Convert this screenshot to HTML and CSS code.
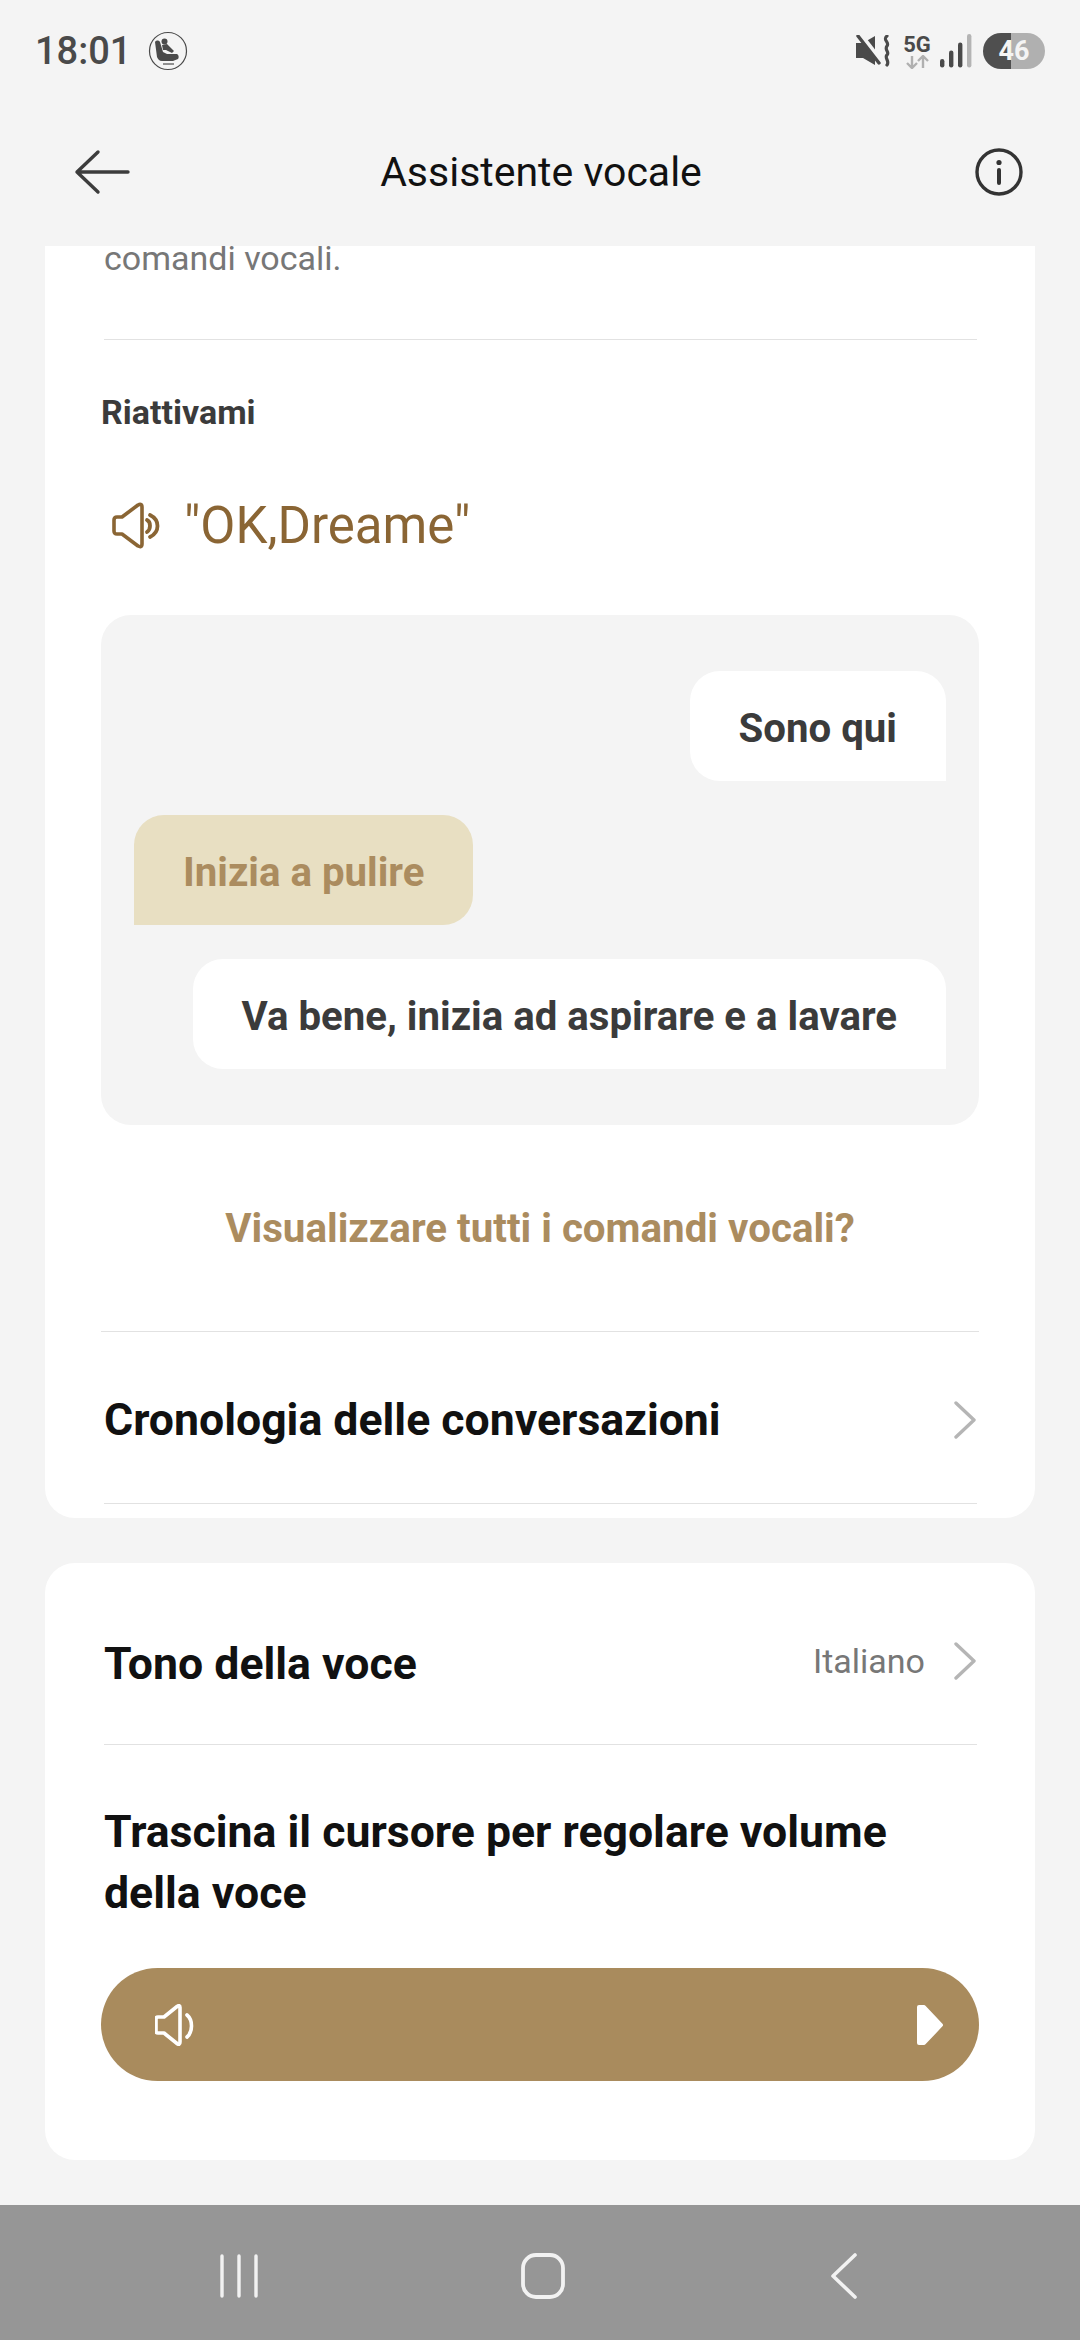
FILE: index.html
```html
<!DOCTYPE html>
<html lang="it">
<head>
    <meta charset="UTF-8">
    <meta name="viewport" content="width=device-width, initial-scale=1.0">
    <title>Assistente vocale</title>
    <link rel="stylesheet" href="styles.css">
</head>
<body>
    <div class="screen">
        <!-- Status bar -->
        <div class="status">
            <div class="status-left">
                <span class="clock">18:01</span>
                <svg class="seat" width="40" height="40" viewBox="0 0 40 40">
                    <circle cx="20" cy="20" r="18.5" fill="none" stroke="#4a4a4a" stroke-width="1.2"/>
                    <circle cx="16.5" cy="10.5" r="3" fill="#4a4a4a"/>
                    <path d="M7 11c1-2 4-2 5 0l3 10 4 2 10 0c2 1 2 4 1 5l-5 2-11 0c-3 0-4-2-5-4z" fill="#4a4a4a"/>
                    <path d="M14 14l5-1 7 7-2 2-6-3-3 0z" fill="#4a4a4a"/>
                    <path d="M15 33h11" stroke="#4a4a4a" stroke-width="1.2"/>
                </svg>
            </div>
            <div class="status-right">
                <svg class="mute" width="36" height="32" viewBox="0 0 36 32">
                    <path d="M1 8h7l12-7v29L8 23H1z" fill="#4a4a4a"/>
                    <path d="M5 0l21 27" stroke="#f4f4f4" stroke-width="6"/>
                    <path d="M3 1l21 27" stroke="#4a4a4a" stroke-width="3.4" stroke-linecap="round"/>
                    <path d="M32 1c-5 4 3 6 0 10s3 6 0 9 3 6 0 10" fill="none" stroke="#4a4a4a" stroke-width="3.2" stroke-linecap="round"/>
                </svg>
                <div class="net">
                    <span class="net-label">5G</span>
                    <svg width="24" height="14" viewBox="0 0 24 14">
                        <path d="M7 1v11M2 8l5 5 5-5" fill="none" stroke="#b0b0b0" stroke-width="2.4"/>
                        <path d="M18 13V2M13 6l5-5 5 5" fill="none" stroke="#b0b0b0" stroke-width="2.4"/>
                    </svg>
                </div>
                <svg class="signal" width="32" height="34" viewBox="0 0 32 34">
                    <rect x="0" y="25" width="4.4" height="8.5" rx="2.2" fill="#4a4a4a"/>
                    <rect x="9" y="16.5" width="4.4" height="17" rx="2.2" fill="#4a4a4a"/>
                    <rect x="18" y="8.5" width="4.4" height="25" rx="2.2" fill="#4a4a4a"/>
                    <rect x="27" y="0" width="4.4" height="33.5" rx="2.2" fill="#b4b4b4"/>
                </svg>
                <div class="battery"><span class="battery-num">46</span></div>
            </div>
        </div>

        <!-- Title bar -->
        <div class="titlebar">
            <svg width="56" height="46" viewBox="0 0 56 46">
                <path d="M54 23H3M24 3L3 23l21 20" fill="none" stroke="#3c3c3c" stroke-width="3.4" stroke-linecap="round" stroke-linejoin="round"/>
            </svg>
            <span class="title">Assistente vocale</span>
            <svg width="48" height="48" viewBox="0 0 48 48">
                <circle cx="24" cy="24" r="22" fill="none" stroke="#333" stroke-width="3.4"/>
                <circle cx="24" cy="14.5" r="2.6" fill="#333"/>
                <path d="M24 22v13" stroke="#333" stroke-width="4" stroke-linecap="round"/>
            </svg>
        </div>

        <div class="content">
            <div class="card card-first">
                <p class="desc">comandi vocali.</p>
                <div class="sep first-sep"></div>
                <h2 class="label">Riattivami</h2>
                <div class="wake">
                    <svg width="48" height="47" viewBox="0 0 48 47">
                        <path d="M2 18c0-2 1-3 3-3h5L26 3c2-1 4-1 4 2v37c0 3-2 3-4 2L10 32H5c-2 0-3-1-3-3z" fill="none" stroke="#8a6534" stroke-width="3.6" stroke-linejoin="round"/>
                        <path d="M35 18c4 2 4 9 0 12M38 13c10 5 10 17 0 22" fill="none" stroke="#8a6534" stroke-width="3.8" stroke-linecap="round"/>
                    </svg>
                    <span class="wake-text">"OK,Dreame"</span>
                </div>
                <div class="chat">
                    <div class="bubble bubble-right">Sono qui</div>
                    <div class="bubble bubble-user">Inizia a pulire</div>
                    <div class="bubble bubble-right">Va bene, inizia ad aspirare e a lavare</div>
                </div>
                <div class="all-link">Visualizzare tutti i comandi vocali?</div>
                <div class="sep sep-wide"></div>
                <div class="row row-history">
                    <span class="row-title">Cronologia delle conversazioni</span>
                    <svg class="chev" width="24" height="38" viewBox="0 0 24 38"><path d="M3 2l18 17L3 36" fill="none" stroke="#b5b5b5" stroke-width="3.4" stroke-linecap="round" stroke-linejoin="round"/></svg>
                </div>
                <div class="sep"></div>
            </div>

            <div class="card card-second">
                <div class="row row-tone">
                    <span class="row-title">Tono della voce</span>
                    <div class="row-end">
                        <span class="row-value">Italiano</span>
                        <svg class="chev" width="24" height="38" viewBox="0 0 24 38"><path d="M3 2l18 17L3 36" fill="none" stroke="#b5b5b5" stroke-width="3.4" stroke-linecap="round" stroke-linejoin="round"/></svg>
                    </div>
                </div>
                <div class="sep"></div>
                <p class="volume-title">Trascina il cursore per regolare volume della voce</p>
                <div class="slider">
                    <svg width="42" height="42" viewBox="0 0 42 42">
                        <path d="M3 13h6L22 2.5c2-1.500 3-1 3 1V38c0 2.500-1 3-3 1.500L9 29H3c-1.300 0-2-.7-2-2V15c0-1.300.7-2 2-2z" fill="none" stroke="#fff" stroke-width="3.6" stroke-linejoin="round"/>
                        <path d="M32 11c6 5 6 17 0 22" fill="none" stroke="#fff" stroke-width="3.6" stroke-linecap="round"/>
                    </svg>
                    <svg width="28" height="42" viewBox="0 0 28 42">
                        <path d="M3 3h5l17 18L8 39H3z" fill="#fff" stroke="#fff" stroke-width="4" stroke-linejoin="round"/>
                    </svg>
                </div>
            </div>
        </div>

        <!-- Android nav bar -->
        <div class="navbar">
            <svg width="42" height="46" viewBox="0 0 42 46">
                <path d="M4 3v40M21 3v40M38 3v40" stroke="#f2f2f2" stroke-width="3.4" stroke-linecap="round"/>
            </svg>
            <svg width="46" height="48" viewBox="0 0 46 48">
                <rect x="3" y="3" width="40" height="42" rx="13" fill="none" stroke="#f2f2f2" stroke-width="3.8"/>
            </svg>
            <svg class="nav-back" width="28" height="48" viewBox="0 0 28 48">
                <path d="M25 3L3 24l22 21" fill="none" stroke="#f2f2f2" stroke-width="3.6" stroke-linecap="round" stroke-linejoin="round"/>
            </svg>
        </div>
    </div>
</body>
</html>
```

FILE: styles.css
```css
* {
    box-sizing: border-box;
}

html, body {
    margin: 0;
    padding: 0;
}

body {
    font-family: Roboto, "Noto Sans", sans-serif;
    background-color: #f4f4f4;
}

.screen {
    width: 1080px;
    height: 2340px;
    display: flex;
    flex-direction: column;
    background-color: #f4f4f4;
    overflow: hidden;
}

/* Status bar */
.status {
    height: 102px;
    flex-shrink: 0;
    display: flex;
    align-items: center;
    justify-content: space-between;
    padding: 0 35px;
}

.status-left, .status-right {
    display: flex;
    align-items: center;
}

.clock {
    font-size: 38px;
    font-weight: 500;
    color: #4a4a4a;
}

.seat {
    margin-left: 17px;
}

.status-right svg {
    flex-shrink: 0;
}

.net {
    display: flex;
    flex-direction: column;
    align-items: center;
    margin-left: 11px;
    width: 30px;
    padding-top: 1px;
}

.net-label {
    font-size: 22px;
    line-height: 19px;
    margin-bottom: 1px;
    font-weight: 700;
    color: #4a4a4a;
}

.signal {
    margin-left: 8px;
}

.battery {
    width: 62px;
    height: 36px;
    margin-left: 11px;
    border-radius: 18px;
    background: linear-gradient(90deg, #4f4f4f 0 45%, #b0b0b0 45% 100%);
    display: flex;
    align-items: center;
    justify-content: center;
}

.battery-num {
    font-size: 27px;
    font-weight: 700;
    color: #f4f4f4;
}

/* Title bar */
.titlebar {
    height: 144px;
    flex-shrink: 0;
    display: flex;
    align-items: center;
    justify-content: space-between;
    padding: 0 57px 4px 74px;
}

.title {
    font-size: 41px;
    color: #111;
    margin-right: 23px;
}

/* Scrolled content */
.content {
    flex: 1;
    min-height: 0;
    padding: 0 45px;
    overflow: hidden;
}

.card {
    background-color: #fff;
    border-radius: 30px;
    padding: 0 56px;
}

.card-first {
    margin-top: -30px;
    height: 1302px;
}

.card-second {
    margin-top: 45px;
    height: 597px;
}

.desc {
    margin: 0 3px;
    font-size: 34px;
    line-height: 48px;
    padding-top: 18px;
    color: #777;
}

.sep {
    height: 1px;
    margin: 0 2px 0 3px;
    background-color: #e2e2e2;
}

.first-sep {
    margin-top: 57px;
}

.sep-wide {
    margin: 0;
}

.label {
    margin: 0;
    padding-top: 54px;
    font-size: 34px;
    line-height: 36px;
    font-weight: 700;
    color: #3b3b3b;
}

.wake {
    display: flex;
    align-items: center;
    gap: 24px;
    margin: 65px 0 0 11px;
    height: 60px;
}

.wake-text {
    font-size: 51px;
    color: #8a6534;
}

/* Chat sample */
.chat {
    margin-top: 60px;
    height: 510px;
    padding: 56px 33px 0;
    display: flex;
    flex-direction: column;
    align-items: flex-start;
    gap: 34px;
    background-color: #f4f4f4;
    border-radius: 30px;
}

.bubble {
    height: 110px;
    padding: 4px 49px 0;
    display: flex;
    align-items: center;
    font-size: 40.2px;
    font-weight: 700;
    white-space: nowrap;
    color: #3b3b3b;
    background-color: #fff;
    border-radius: 30px;
}

.bubble-right {
    align-self: flex-end;
    border-bottom-right-radius: 0;
}

.bubble-user {
    color: #ab8c5f;
    background-color: #e8dfc2;
    border-bottom-left-radius: 0;
}

.all-link {
    height: 206px;
    display: flex;
    align-items: center;
    justify-content: center;
    font-size: 40.3px;
    font-weight: 700;
    color: #ab8c5f;
}

/* Rows */
.row {
    display: flex;
    align-items: center;
    justify-content: space-between;
    padding: 0 2px 0 3px;
}

.row-history {
    height: 171px;
    padding-top: 4px;
}

.row-tone {
    height: 181px;
    padding-top: 20px;
}

.row-title {
    font-size: 44.6px;
    font-weight: 700;
    color: #111;
}

.row-end {
    display: flex;
    align-items: center;
    gap: 28px;
    margin-bottom: 5px;
}

.row-value {
    font-size: 34px;
    color: #777;
}

.volume-title {
    margin: 0;
    padding: 57px 3px 0;
    font-size: 44.6px;
    line-height: 61px;
    font-weight: 700;
    color: #111;
}

.slider {
    height: 113px;
    margin-top: 44px;
    padding: 0 35px 0 54px;
    display: flex;
    align-items: center;
    justify-content: space-between;
    background-color: #a98b5d;
    border-radius: 57px;
}

/* Nav bar */
.navbar {
    height: 135px;
    flex-shrink: 0;
    display: flex;
    align-items: center;
    gap: 260px;
    padding: 6px 0 0 218px;
    background-color: #969696;
}

.nav-back {
    margin-left: 4px;
}
```
